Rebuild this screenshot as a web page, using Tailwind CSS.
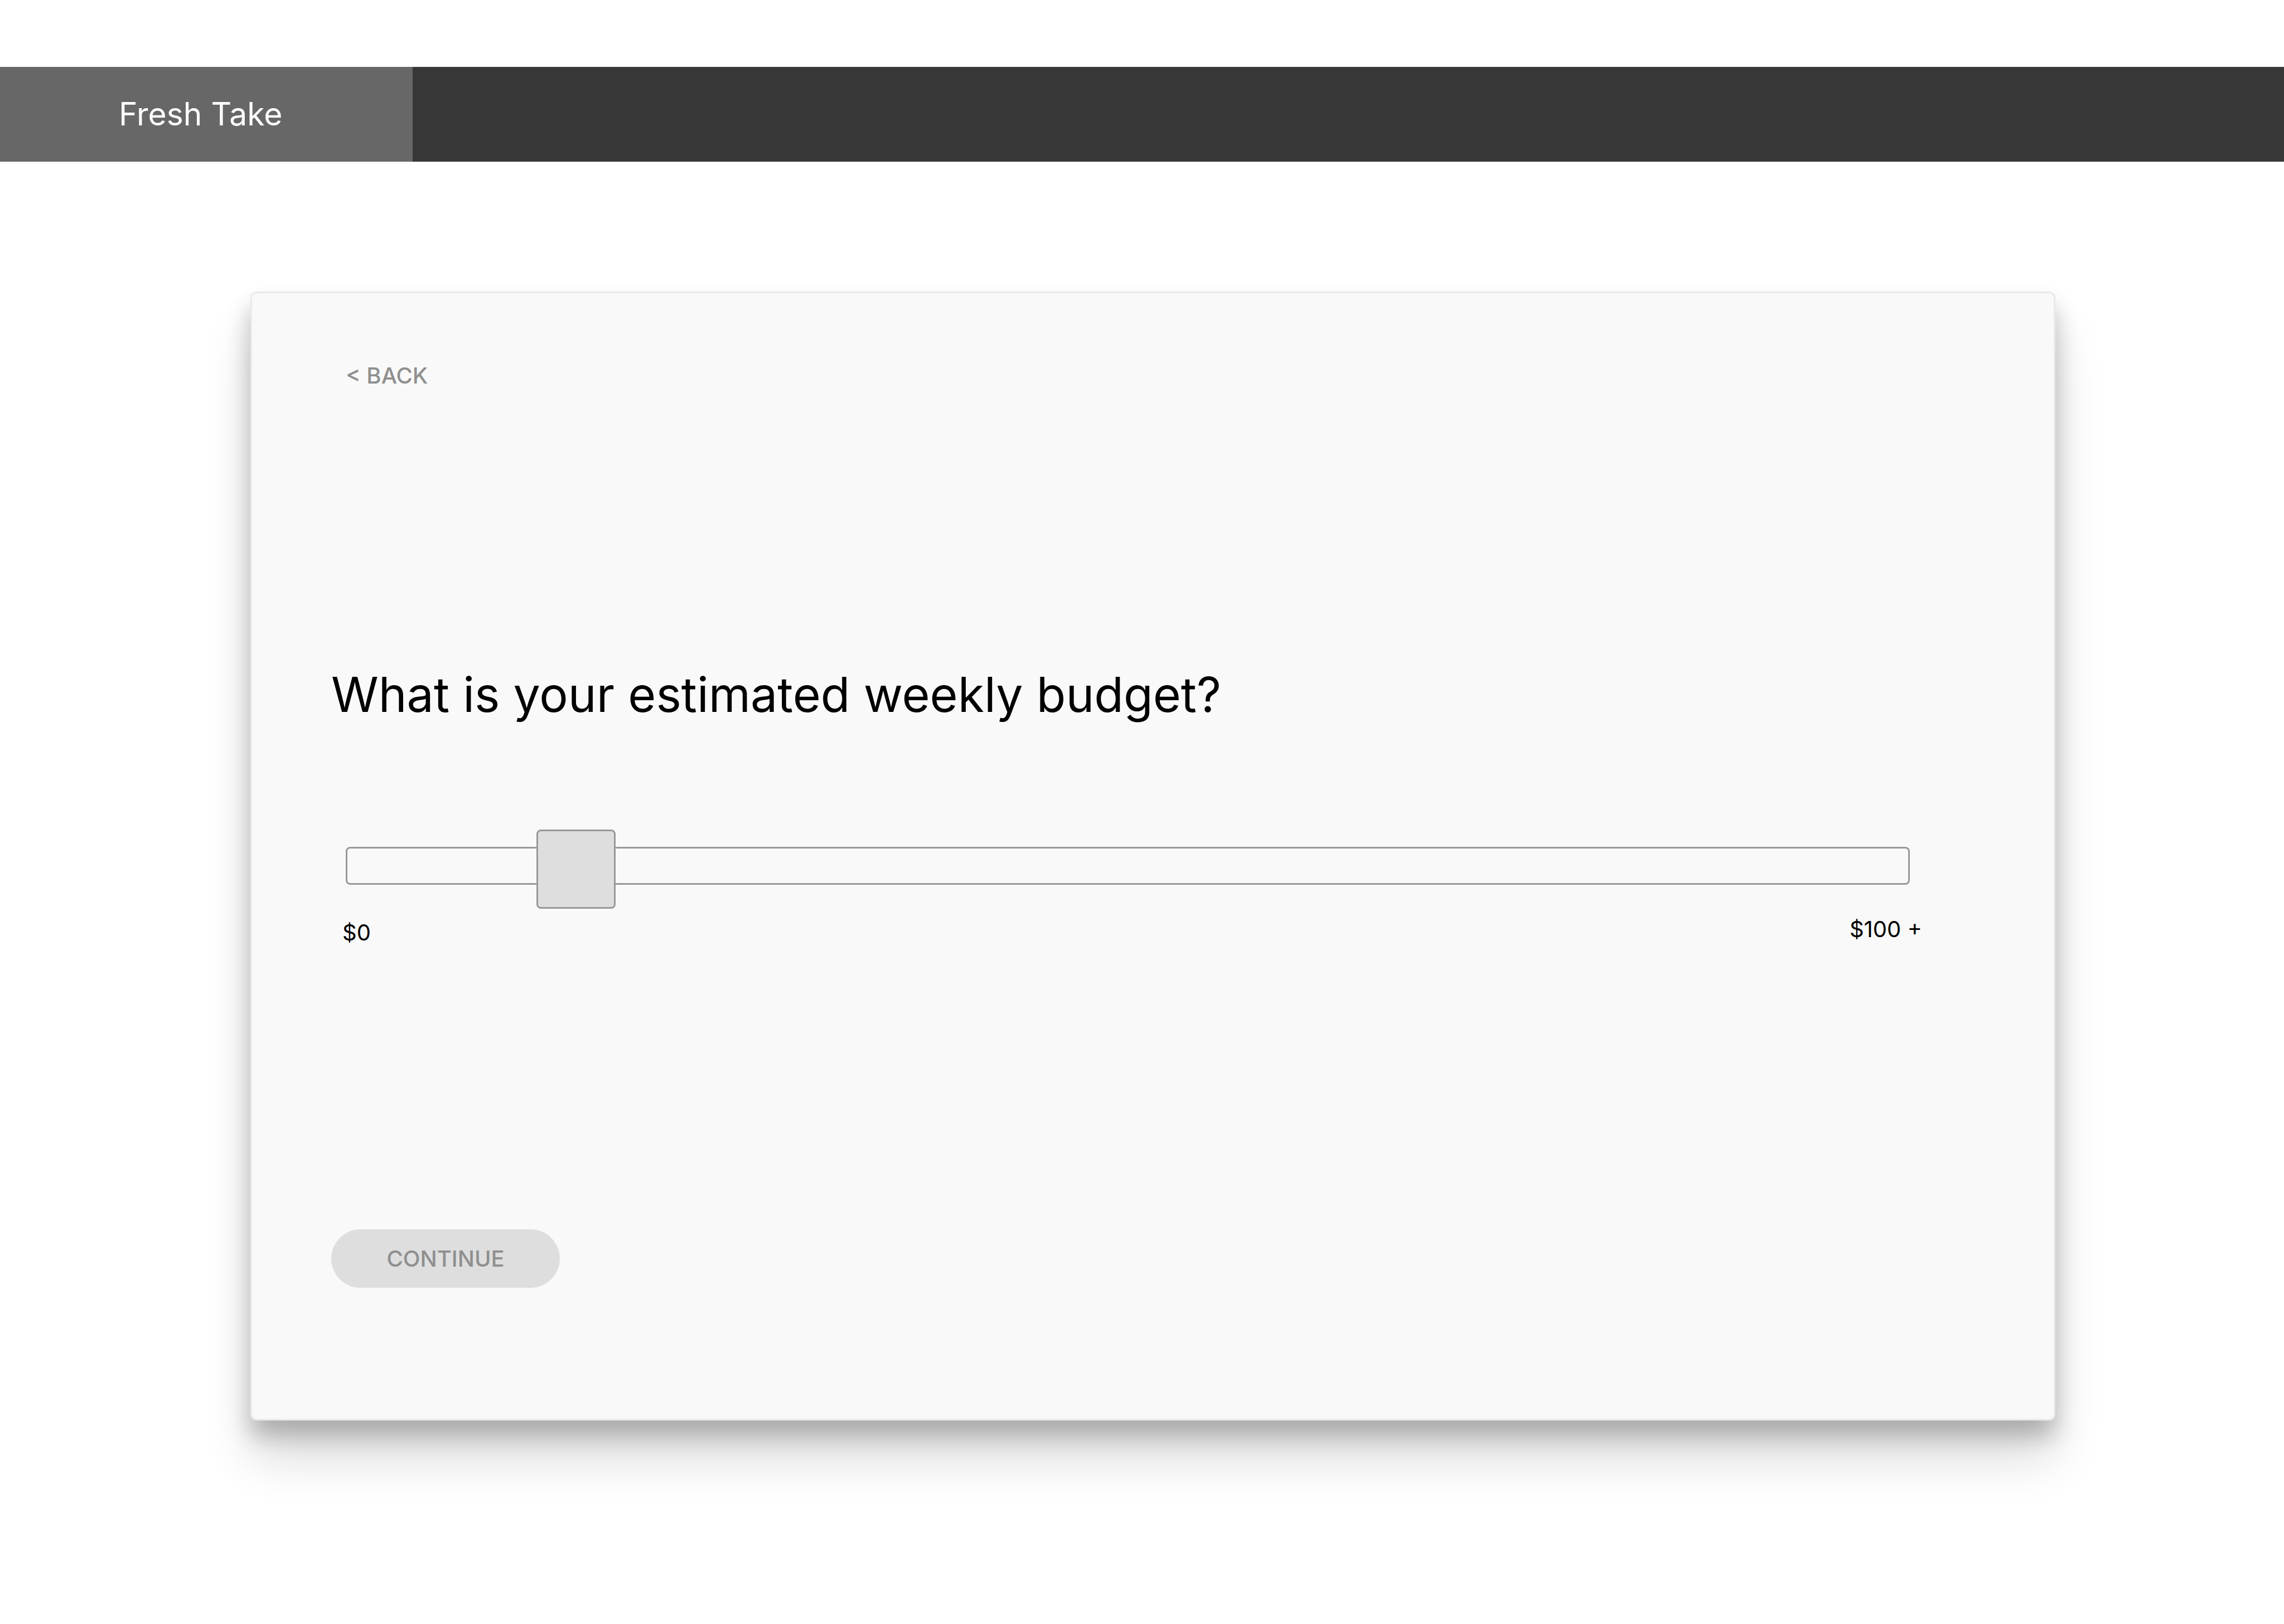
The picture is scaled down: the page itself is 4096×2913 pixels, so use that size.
<!DOCTYPE html>
<html lang="en">
<head>
<meta charset="utf-8">
<meta name="viewport" content="width=device-width, initial-scale=1">
<title>Fresh Take</title>
<script src="https://cdn.jsdelivr.net/npm/@tailwindcss/browser@4"></script>
</head>
<body class="min-h-screen bg-white pt-[120px] font-['Inter',sans-serif] text-black">
  <header class="flex h-[170px] bg-[#373737]">
    <a href="#" class="flex w-[740px] items-center bg-[#676767] pl-[213px] text-[57px] leading-[70px] text-white">Fresh Take</a>
  </header>

  <main class="pt-[233px] pr-[410px] pl-[449px]">
    <form class="flex flex-col items-start rounded-[11px] border-3 border-[#eaeaea] bg-[#f9f9f9] pt-[124px] pr-[236px] pb-[235px] pl-[142px] shadow-[0_27px_40px_rgba(0,0,0,0.23),0_68px_85px_rgba(0,0,0,0.14)]">
      <a href="#" class="ml-[26px] text-[40px] leading-[48px] font-medium text-[#8f8f8f]">&lt; BACK</a>

      <label for="budget" class="mt-[496px] text-[86px] leading-[104px]">What is your estimated weekly budget?</label>

      <div class="mt-[184px] w-full pr-[22px] pl-[26px]">
        <input id="budget" type="range" min="0" max="100" step="any" value="12.75"
          class="block h-[142px] w-full cursor-pointer appearance-none bg-transparent [&::-webkit-slider-runnable-track]:h-[68px] [&::-webkit-slider-runnable-track]:rounded-[8px] [&::-webkit-slider-runnable-track]:border-3 [&::-webkit-slider-runnable-track]:border-[#999999] [&::-webkit-slider-thumb]:-mt-[34px] [&::-webkit-slider-thumb]:size-[142px] [&::-webkit-slider-thumb]:appearance-none [&::-webkit-slider-thumb]:rounded-[8px] [&::-webkit-slider-thumb]:border-3 [&::-webkit-slider-thumb]:border-[#999999] [&::-webkit-slider-thumb]:bg-[#dedede]">
      </div>
      <div class="mt-[19px] flex w-full items-start justify-between pl-[20px] text-[40px] leading-[48px]">
        <span class="pt-[6px]">$0</span>
        <span>$100 +</span>
      </div>

      <button type="button" class="mt-[508px] h-[105px] w-[410px] rounded-full bg-[#dedede] text-[40px] leading-[48px] font-medium text-[#8f8f8f]">CONTINUE</button>
    </form>
  </main>
</body>
</html>
